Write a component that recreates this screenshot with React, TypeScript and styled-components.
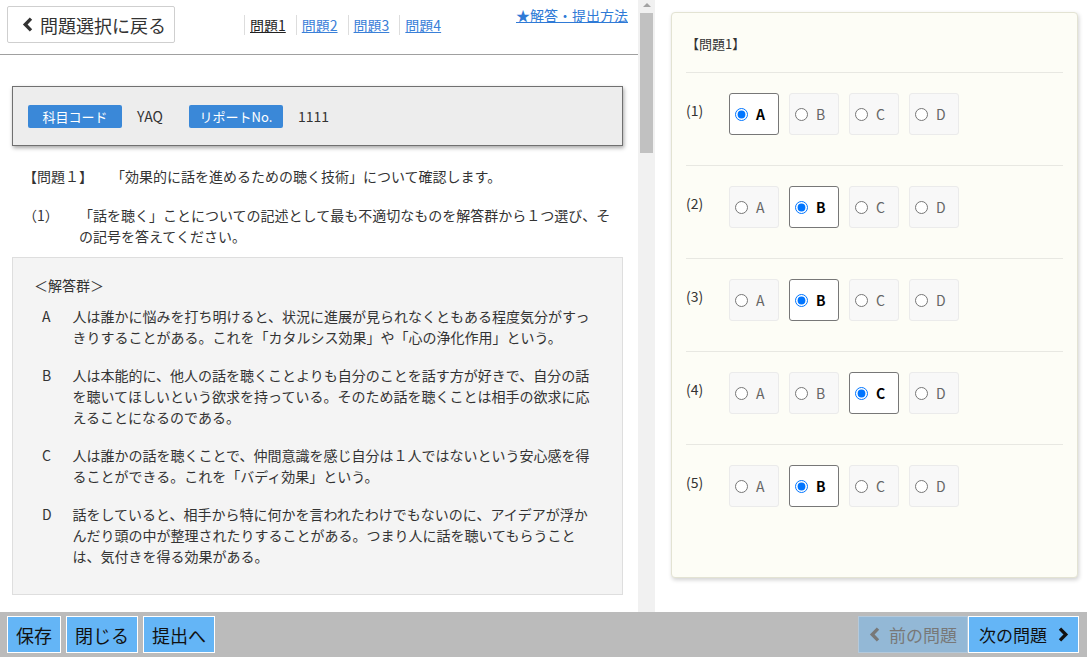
import React, { useState } from "react";
import styled, { createGlobalStyle } from "styled-components";

const GlobalStyle = createGlobalStyle`
  html, body { margin: 0; padding: 0; height: 100%; }
  body {
    font-family: "Noto Sans CJK JP", "Noto Sans", sans-serif;
    color: #333;
    background: #fff;
    overflow: hidden;
  }
  #root { height: 100%; }
  *, *::before, *::after { box-sizing: border-box; }
`;

const Page = styled.div`
  display: flex;
  flex-direction: column;
  width: 1087px;
  height: 657px;
`;

const Main = styled.div`
  display: flex;
  flex: 1;
  min-height: 0;
`;

const LeftPane = styled.div`
  width: 638px;
  flex: none;
  overflow: hidden;
`;

const Header = styled.header`
  display: flex;
  align-items: flex-start;
  height: 55px;
  padding: 0 10px 0 7px;
  border-bottom: 1px solid #a0a0a0;
`;

const BackButton = styled.button`
  margin-top: 6px;
  height: 37px;
  display: flex;
  align-items: center;
  gap: 7px;
  padding: 0 8px 0 14px;
  border: 1px solid #cfcfcf;
  border-radius: 2px;
  background: #fff;
  font-family: inherit;
  font-size: 18px;
  color: #333;
  cursor: pointer;
`;

const Tabs = styled.nav`
  display: flex;
  margin: 15px 0 0 69px;
`;

const Tab = styled.a<{ $active?: boolean }>`
  border-left: 1px solid #ddd;
  padding: 0 10px 0 5px;
  font-size: 14px;
  line-height: 20px;
  color: ${(p) => (p.$active ? "#222" : "#3a80d8")};
  text-decoration: underline;
  cursor: pointer;
`;

const HelpLink = styled.a`
  margin: 5px 0 0 auto;
  font-size: 14px;
  line-height: 20px;
  color: #2f7ad6;
  text-decoration: underline;
  cursor: pointer;
`;

const Content = styled.div`
  padding: 0 15px 20px 12px;
`;

const InfoBox = styled.div`
  margin-top: 31px;
  height: 60px;
  display: flex;
  align-items: center;
  padding: 0 15px;
  background: #ededed;
  border: 1px solid #707070;
  box-shadow: 1px 2px 4px rgba(0, 0, 0, 0.35);
`;

const Badge = styled.span`
  width: 94px;
  height: 23px;
  line-height: 23px;
  text-align: center;
  background: #3a88d8;
  color: #fff;
  font-size: 13px;
  border-radius: 2px;
`;

const InfoValue = styled.span`
  font-size: 14px;
  margin: 0 26px 0 15px;
`;

const QuestionHead = styled.div`
  margin-top: 20px;
  padding-left: 11px;
  display: flex;
  font-size: 14px;
  line-height: 21px;
`;

const HeadLabel = styled.span`
  width: 88px;
  flex: none;
`;

const SubQuestion = styled.div`
  margin-top: 18px;
  padding-left: 11px;
  display: flex;
  font-size: 14px;
  line-height: 21px;
`;

const SubLabel = styled.span`
  width: 56px;
  flex: none;
`;

const AnswerBox = styled.div`
  margin-top: 10px;
  padding: 17px 22px 27px 21px;
  background: #f4f4f4;
  border: 1px solid #dedede;
  font-size: 14px;
  line-height: 21px;
`;

const AnswerList = styled.div`
  margin-top: 10px;
  display: flex;
  flex-direction: column;
  gap: 17px;
`;

const AnswerItem = styled.div`
  display: flex;
  padding-left: 8px;
`;

const AnswerLetter = styled.span`
  width: 30.5px;
  flex: none;
`;

const AnswerText = styled.span`
  flex: 1;
`;

const ScrollTrack = styled.div`
  width: 17px;
  flex: none;
  background: #f1f1f1;
  display: flex;
  flex-direction: column;
  align-items: center;
`;

const ScrollArrow = styled.div`
  width: 0;
  height: 0;
  margin-top: 3px;
  border-left: 4px solid transparent;
  border-right: 4px solid transparent;
  border-bottom: 4px solid #a3a3a3;
`;

const ScrollThumb = styled.div`
  width: 13px;
  height: 140px;
  margin-top: 6px;
  background: #c1c1c1;
`;

const RightPane = styled.div`
  flex: 1;
  padding: 12px 9px 0 16px;
  background: #fff;
`;

const Card = styled.section`
  padding: 0 14px 40px;
  background: #fdfdf6;
  border: 1px solid #e3e3d3;
  border-radius: 4px;
  box-shadow: 1px 2px 4px rgba(0, 0, 0, 0.18);
`;

const CardTitle = styled.div`
  padding: 20px 0 18px;
  font-size: 13px;
  line-height: 21px;
`;

const Row = styled.div`
  display: flex;
  align-items: flex-start;
  border-top: 1px solid #e8e8e2;
  padding: 20px 0 30px;
`;

const RowLabel = styled.span`
  width: 43px;
  flex: none;
  padding-top: 7px;
  font-size: 14px;
  line-height: 21px;
`;

const Options = styled.div`
  display: flex;
  gap: 10px;
`;

const Option = styled.label<{ $selected: boolean }>`
  width: 50px;
  height: 42px;
  display: flex;
  align-items: center;
  border: 1px solid ${(p) => (p.$selected ? "#777" : "#ebebeb")};
  border-radius: 3px;
  background: ${(p) => (p.$selected ? "#fff" : "#f8f8f8")};
  cursor: pointer;
`;

const Radio = styled.input`
  width: 13px;
  height: 13px;
  margin: 0 4px 0 5px;
`;

const OptionLetter = styled.span<{ $selected: boolean }>`
  margin-left: 4px;
  font-size: 14px;
  font-weight: ${(p) => (p.$selected ? 700 : 400)};
  color: ${(p) => (p.$selected ? "#000" : "#666")};
`;

const Footer = styled.footer`
  height: 45px;
  flex: none;
  background: #bbbbbb;
  display: flex;
  align-items: center;
  padding: 0 8px 0 7px;
`;

const FooterButton = styled.button`
  height: 37px;
  padding: 0 8px;
  margin-right: 5px;
  border: 1px solid #fff;
  background: #64b5f6;
  font-family: inherit;
  font-size: 18px;
  color: #111;
  cursor: pointer;
`;

const NavGroup = styled.div`
  margin-left: auto;
  display: flex;
`;

const NavButton = styled.button<{ $disabled?: boolean }>`
  height: 37px;
  display: flex;
  align-items: center;
  gap: ${(p) => (p.$disabled ? "9px" : "11px")};
  padding: ${(p) => (p.$disabled ? "0 10px 0 10px" : "0 9px 0 10px")};
  border: 1px solid ${(p) => (p.$disabled ? "#b4c9db" : "#fff")};
  background: ${(p) => (p.$disabled ? "#93b8d6" : "#64b5f6")};
  color: ${(p) => (p.$disabled ? "#787878" : "#111")};
  font-family: inherit;
  font-size: 17px;
  cursor: ${(p) => (p.$disabled ? "default" : "pointer")};
`;

const Chevron = ({ dir }: { dir: "left" | "right" }) => (
  <svg width="11" height="15" viewBox="0 0 11 15" aria-hidden="true">
    <path
      d={dir === "left" ? "M9 1.6 L3.2 7.5 L9 13.4" : "M2 1.6 L7.8 7.5 L2 13.4"}
      stroke="currentColor"
      strokeWidth="3.3"
      fill="none"
      strokeLinejoin="miter"
    />
  </svg>
);

const answers = [
  {
    letter: "A",
    text: "人は誰かに悩みを打ち明けると、状況に進展が見られなくともある程度気分がすっきりすることがある。これを「カタルシス効果」や「心の浄化作用」という。",
  },
  {
    letter: "B",
    text: "人は本能的に、他人の話を聴くことよりも自分のことを話す方が好きで、自分の話を聴いてほしいという欲求を持っている。そのため話を聴くことは相手の欲求に応えることになるのである。",
  },
  {
    letter: "C",
    text: "人は誰かの話を聴くことで、仲間意識を感じ自分は１人ではないという安心感を得ることができる。これを「バディ効果」という。",
  },
  {
    letter: "D",
    text: "話をしていると、相手から特に何かを言われたわけでもないのに、アイデアが浮かんだり頭の中が整理されたりすることがある。つまり人に話を聴いてもらうことは、気付きを得る効果がある。",
  },
];

const LETTERS = ["A", "B", "C", "D"];

export default function App() {
  const [selected, setSelected] = useState<number[]>([0, 1, 1, 2, 1]);

  const choose = (row: number, idx: number) =>
    setSelected((prev) => prev.map((v, i) => (i === row ? idx : v)));

  return (
    <>
      <GlobalStyle />
      <Page>
        <Main>
          <LeftPane>
            <Header>
              <BackButton>
                <Chevron dir="left" />
                問題選択に戻る
              </BackButton>
              <Tabs>
                <Tab $active>問題1</Tab>
                <Tab>問題2</Tab>
                <Tab>問題3</Tab>
                <Tab>問題4</Tab>
              </Tabs>
              <HelpLink>★解答・提出方法</HelpLink>
            </Header>
            <Content>
              <InfoBox>
                <Badge>科目コード</Badge>
                <InfoValue>YAQ</InfoValue>
                <Badge>リポートNo.</Badge>
                <InfoValue>1111</InfoValue>
              </InfoBox>
              <QuestionHead>
                <HeadLabel>【問題１】</HeadLabel>
                <span>「効果的に話を進めるための聴く技術」について確認します。</span>
              </QuestionHead>
              <SubQuestion>
                <SubLabel>（1）</SubLabel>
                <span>
                  「話を聴く」ことについての記述として最も不適切なものを解答群から１つ選び、その記号を答えてください。
                </span>
              </SubQuestion>
              <AnswerBox>
                <div>＜解答群＞</div>
                <AnswerList>
                  {answers.map((a) => (
                    <AnswerItem key={a.letter}>
                      <AnswerLetter>{a.letter}</AnswerLetter>
                      <AnswerText>{a.text}</AnswerText>
                    </AnswerItem>
                  ))}
                </AnswerList>
              </AnswerBox>
            </Content>
          </LeftPane>
          <ScrollTrack>
            <ScrollArrow />
            <ScrollThumb />
          </ScrollTrack>
          <RightPane>
            <Card>
              <CardTitle>【問題1】</CardTitle>
              {selected.map((sel, row) => (
                <Row key={row}>
                  <RowLabel>({row + 1})</RowLabel>
                  <Options>
                    {LETTERS.map((l, idx) => (
                      <Option key={l} $selected={sel === idx}>
                        <Radio
                          type="radio"
                          name={`q${row}`}
                          checked={sel === idx}
                          onChange={() => choose(row, idx)}
                        />
                        <OptionLetter $selected={sel === idx}>{l}</OptionLetter>
                      </Option>
                    ))}
                  </Options>
                </Row>
              ))}
            </Card>
          </RightPane>
        </Main>
        <Footer>
          <FooterButton>保存</FooterButton>
          <FooterButton>閉じる</FooterButton>
          <FooterButton>提出へ</FooterButton>
          <NavGroup>
            <NavButton $disabled disabled>
              <Chevron dir="left" />
              前の問題
            </NavButton>
            <NavButton>
              次の問題
              <Chevron dir="right" />
            </NavButton>
          </NavGroup>
        </Footer>
      </Page>
    </>
  );
}
